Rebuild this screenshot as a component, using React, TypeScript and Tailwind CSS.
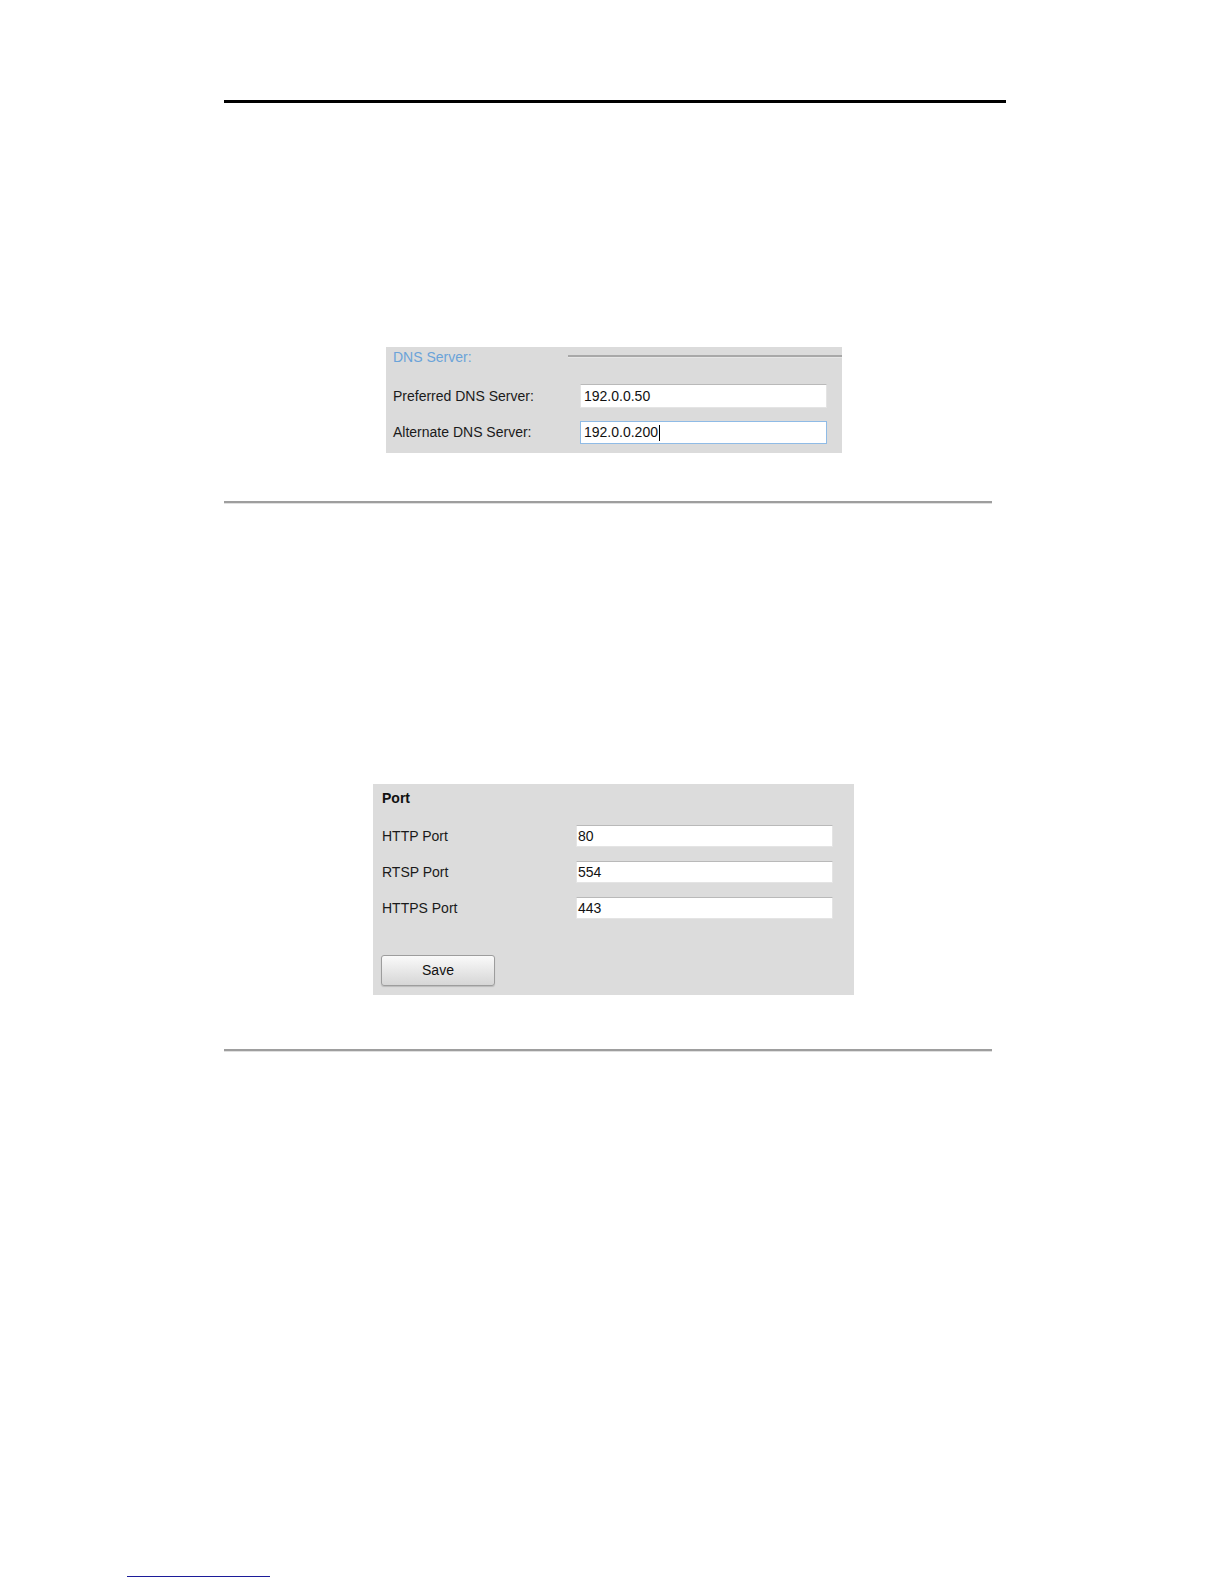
import React from "react";

const font = { fontFamily: '"Liberation Sans", Arial, sans-serif' };

function Field({ value, focused, pad = "pl-[3px]" }: { value: string; focused?: boolean; pad?: string }) {
  return (
    <div
      className={
        "h-full w-full bg-white flex items-center text-[14px] text-[#111] border " +
        pad +
        " " +
        (focused
          ? "border-[#8fbbe6]"
          : "border-[#e4e4e4] border-t-[#b9b9b9]")
      }
    >
      <span>{value}</span>
      {focused && <span className="ml-[1px] w-[1px] h-[16px] bg-black" />}
    </div>
  );
}

export default function App() {
  return (
    <div className="w-[1224px] h-[1584px] bg-white flex flex-col" style={font}>
      {/* header rule */}
      <div className="mt-[100px] ml-[224px] w-[782px] h-[3px] bg-black" />

      {/* DNS panel */}
      <div className="mt-[244px] ml-[386px] w-[456px] h-[106px] bg-[#dbdbdb] flex flex-col text-[14px] text-[#1a1a1a]">
        <div className="h-[22px] flex items-start">
          <span className="ml-[7px] mt-[1px] text-[#6aa3d9] leading-[18px]">DNS Server:</span>
          <div className="ml-auto mt-[8px] w-[274px] h-[3px] bg-[#a8a8a8] border-b border-[#e6e6e6]" />
        </div>
        <div className="mt-[15px] h-[24px] flex items-center">
          <span className="ml-[7px] w-[187px]">Preferred DNS Server:</span>
          <div className="w-[247px] h-[24px]">
            <Field value="192.0.0.50" />
          </div>
        </div>
        <div className="mt-[13px] h-[23px] flex items-center">
          <span className="ml-[7px] w-[187px]">Alternate DNS Server:</span>
          <div className="w-[247px] h-[23px]">
            <Field value="192.0.0.200" focused />
          </div>
        </div>
      </div>

      {/* section rule */}
      <div className="mt-[48px] ml-[224px] w-[768px] h-[3px] bg-[#9e9e9e] border-b border-[#e0e0e0]" />

      {/* Port panel */}
      <div className="mt-[280px] ml-[373px] w-[481px] h-[211px] bg-[#dcdcdc] flex flex-col text-[14px] text-[#1a1a1a]">
        <div className="h-[28px] flex items-center pl-[9px] font-bold text-[#111]">Port</div>
        {[
          ["HTTP Port", "80"],
          ["RTSP Port", "554"],
          ["HTTPS Port", "443"],
        ].map(([label, val], i) => (
          <div key={label} className={(i === 0 ? "mt-[13px]" : "mt-[14px]") + " h-[22px] flex items-center"}>
            <span className="pl-[9px] w-[203px]">{label}</span>
            <div className="w-[257px] h-[22px]">
              <Field value={val} pad="pl-[1px]" />
            </div>
          </div>
        ))}
        <button className="mt-[36px] ml-[8px] w-[114px] h-[31px] rounded-[3px] border border-[#9d9d9d] bg-gradient-to-b from-[#fafafa] to-[#d6d6d6] text-[14px] text-[#111] shadow-[0_1px_1px_rgba(0,0,0,0.15)]">
          Save
        </button>
      </div>

      {/* section rule */}
      <div className="mt-[54px] ml-[224px] w-[768px] h-[3px] bg-[#9e9e9e] border-b border-[#e0e0e0]" />

      {/* footer link rule */}
      <div className="mt-[524px] ml-[127px] w-[143px] h-[1px] bg-[#1c1c99]" />
    </div>
  );
}
